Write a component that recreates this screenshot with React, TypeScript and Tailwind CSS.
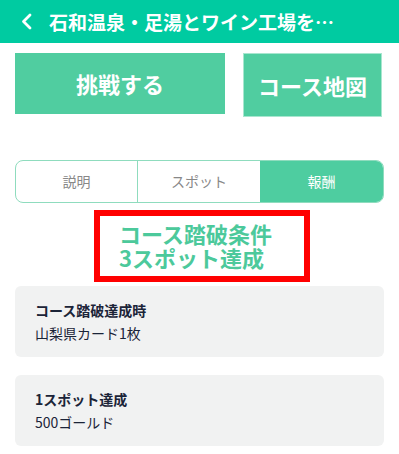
export default function App() {
  const jp = { fontFamily: '"Noto Sans CJK JP", "Noto Sans", sans-serif' }
  return (
    <div className="w-[399px] h-[454px] bg-white overflow-hidden" style={jp}>
      <header className="h-[43px] bg-[#00cba1] flex items-center text-white">
        <svg className="ml-[20px] w-[13px] h-[17px]" viewBox="0 0 13 17" fill="none">
          <path d="M10 2L3.5 8.5L10 15" stroke="white" strokeWidth="2.8" strokeLinecap="round" strokeLinejoin="round" />
        </svg>
        <h1 className="ml-[16px] text-[19px] font-bold leading-none whitespace-nowrap">
          石和温泉・足湯とワイン工場を…
        </h1>
      </header>

      <div className="flex items-start px-[15px] pt-[10px]">
        <button className="w-[210px] h-[61px] bg-[#50cda0] text-white text-[22px] font-bold flex items-center justify-center">
          挑戦する
        </button>
        <button className="ml-[18px] w-[139px] h-[64px] bg-[#50cda0] border border-[#a8e6cf] text-white text-[22px] font-bold flex items-center justify-center">
          コース地図
        </button>
      </div>

      <div className="mx-[15px] mt-[43px] h-[43px] flex rounded-[8px] border border-[#8fdcbe] overflow-hidden text-[14px] text-[#888]">
        <div className="w-[122px] flex items-center justify-center border-r border-[#8fdcbe]">説明</div>
        <div className="w-[122px] flex items-center justify-center">スポット</div>
        <div className="flex-1 flex items-center justify-center bg-[#4ecda0] text-white">報酬</div>
      </div>

      <div className="ml-[94px] mt-[7px] w-[216px] h-[72px] border-[6px] border-[#ff0000] pl-[19px] pt-[5px] text-[22px] leading-[24px] font-bold text-[#4cc99b]">
        <div>コース踏破条件</div>
        <div>3スポット達成</div>
      </div>

      <div className="mx-[15px] mt-[4px] flex flex-col gap-[18px] text-[#1b2438] text-[14px]">
        <div className="h-[71px] bg-[#f1f2f2] rounded-[6px] px-[20px] pt-[13px]">
          <div className="font-bold leading-[22px]">コース踏破達成時</div>
          <div className="leading-[24px]">山梨県カード1枚</div>
        </div>
        <div className="h-[71px] bg-[#f1f2f2] rounded-[6px] px-[20px] pt-[13px]">
          <div className="font-bold leading-[22px]">1スポット達成</div>
          <div className="leading-[24px]">500ゴールド</div>
        </div>
      </div>
    </div>
  )
}
